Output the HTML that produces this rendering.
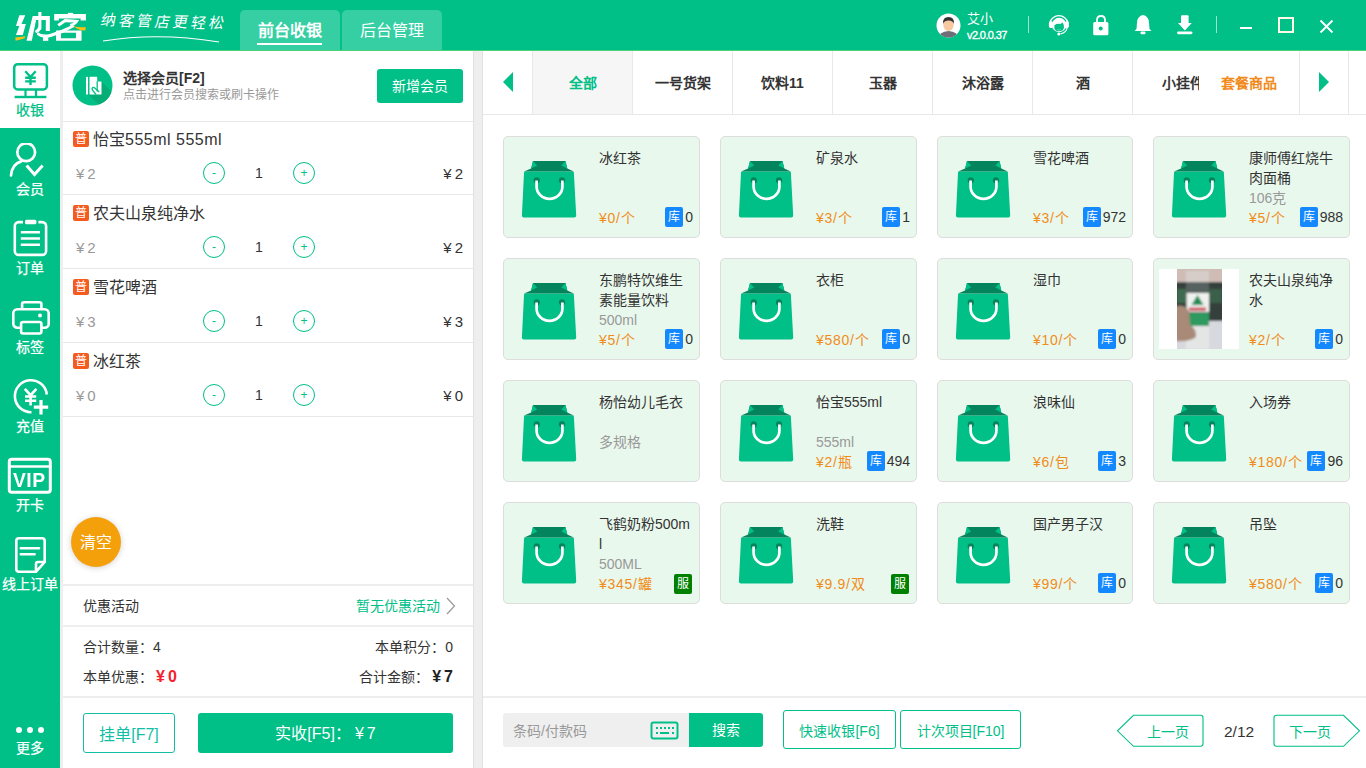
<!DOCTYPE html>
<html lang="zh-CN"><head><meta charset="utf-8">
<style>
*{margin:0;padding:0;box-sizing:border-box}
html,body{width:1366px;height:768px;overflow:hidden;background:#eeeeee;font-family:"Liberation Sans",sans-serif;color:#333}
.a{position:absolute}
#hdr{left:0;top:0;width:1366px;height:51px;background:#00bf87;border-bottom:1px solid #4cd27a}
.tab{top:10px;height:40px;width:100px;background:#35cfa3;border-radius:5px 5px 0 0;color:#fff;font-size:16px;text-align:center;line-height:42px}
#side{left:0;top:51px;width:60px;height:717px;background:#00bf87}
.sn{left:0;width:60px;text-align:center;color:#fff;font-size:14px;line-height:14px;-webkit-text-stroke:0.25px currentColor}
#lp{left:62px;top:51px;width:411px;height:717px;background:#fff}
#rp{left:483px;top:51px;width:883px;height:717px;background:#fff}
.ln{background:#e8e8e8}
.tag{width:16px;height:16px;background:#f55a1e;color:#fff;font-size:12px;line-height:16px;text-align:center;border-radius:2px}
.nm{font-size:16px;color:#333;line-height:18px;white-space:nowrap}
.pr{font-size:15px;color:#999;line-height:16px}
.circ{width:22px;height:22px;border:1px solid #00bf87;border-radius:50%;color:#00bf87;font-size:12px;text-align:center;line-height:20px}
.qty{font-size:14px;color:#333;line-height:16px}
.sub{font-size:15px;color:#333;line-height:16px;text-align:right}
.cat{top:0;height:63px;width:100px;border-left:1px solid #e8e8e8;text-align:center;line-height:65px;font-size:14px;font-weight:bold;color:#333}
.card{width:197px;height:102px;background:#e9f8ed;border:1px solid #dcdddc;border-radius:5px}
.card svg{position:absolute;left:14px;top:18px}
.cn{left:95px;top:12px;font-size:14px;line-height:19px;color:#333;width:98px}
.cs{left:95px;font-size:14px;line-height:16px;color:#999}
.cp{left:95px;top:72px;font-size:14px;line-height:18px;color:#f08c1a;letter-spacing:0.7px}
.kt{top:70px;width:19px;height:20px;background:#1488ff;color:#fff;font-size:12px;line-height:20px;text-align:center;border-radius:2px}
.kv{top:72px;font-size:14px;line-height:18px;color:#333}
.fz{top:71px;width:18px;height:20px;background:#008000;color:#fff;font-size:12px;line-height:20px;text-align:center;border-radius:2px;left:170px}
.y{margin-right:3px}
.obtn{border:1px solid #00bf87;border-radius:3px;color:#00bf87;font-size:14px;text-align:center;background:#fff}
</style></head><body>
<svg width="0" height="0" style="position:absolute">
<defs>
<symbol id="bag" viewBox="0 0 64 67">
<path d="M7,16.6 L54.9,16.6 Q55.9,16.6 55.9,18 L58.2,60.6 Q58.2,62.6 56.2,62.6 L5.9,62.6 Q3.9,62.6 3.9,60.6 L6,18 Q6.1,16.6 7,16.6 Z" fill="#00bf87"/>
<path d="M15,6 L47.5,6 L49.3,13.5 L55.8,16.6 L6.1,16.6 L13.1,13.5 Z" fill="#04845c"/>
<path d="M15,6 L13.1,13.5 L19.2,10.5 Z M47.5,6 L49.3,13.5 L43.2,10.5 Z" fill="#00bf87"/>
<circle cx="18.8" cy="25.3" r="3.1" fill="#04845c"/>
<circle cx="44" cy="25.3" r="3.1" fill="#04845c"/>
<path d="M18.6,25.5 L18.6,31.8 A12.9,12 0 0 0 44.4,31.8 L44.4,25.5" stroke="#fff" stroke-width="2.7" fill="none"/>
</symbol>
</defs>
</svg>

<!-- HEADER -->
<div id="hdr" class="a">
<svg class="a" style="left:10px;top:6px" width="85" height="40" viewBox="0 0 1366 643">
<path d="M150,150 L245,150 L185,290 L255,290 L205,465 L95,465 L150,320 L95,320 Z" fill="#fff"/>
<path d="M85,505 Q160,500 245,485 L235,520 Q170,540 90,560 Z" fill="#fdbf12"/>
<path d="M365,160 L640,160 L640,400 L575,400 L575,225 L420,225 L350,560 L265,560 Z" fill="#fff"/>
<path d="M455,95 L505,95 L505,370 Q470,420 420,440 L400,400 Q450,370 455,330 Z" fill="#fff"/>
<path d="M530,480 L615,480 L615,560 L530,560 Z" fill="#fff"/>
<path d="M930,110 L1015,110 L1015,135 L930,135 Z" fill="#fff"/>
<path d="M710,130 L1220,130 L1220,235 L1135,235 L1135,200 L785,200 L785,235 L710,235 Z" fill="#fff"/>
<path d="M760,295 L880,210 L1110,225 Q1080,300 980,335 L960,290 Q1010,275 1030,265 L890,262 L790,330 Z" fill="#fff"/>
<path d="M445,420 Q520,480 640,450 Q850,380 1010,300 L1040,335 Q860,440 660,500 Q520,535 430,460 Z" fill="#fff"/>
<path d="M740,395 L1150,395 L1150,560 L740,560 Z M820,430 L820,520 L1060,520 L1060,430 Z" fill="#fff" fill-rule="evenodd"/>
<path d="M1020,325 Q1100,350 1220,340 L1210,395 Q1130,395 1080,365 Z" fill="#fdbf12"/>
</svg>
<div class="a" style="left:101px;top:12px;font-size:15px;line-height:20px;color:#fff;letter-spacing:3px;font-weight:300;transform:skewX(-10deg) rotate(1.5deg)">纳客管店更轻松</div>
<svg class="a" style="left:100px;top:33px" width="125" height="12"><path d="M3,8 Q58,-1 119,9" stroke="#fff" stroke-width="1.2" fill="none"/></svg>
<div class="a tab" style="left:240px;font-weight:bold">前台收银</div>
<div class="a" style="left:257px;top:43px;width:65px;height:2px;background:#fff"></div>
<div class="a tab" style="left:342px">后台管理</div>
<!-- avatar -->
<svg class="a" style="left:936px;top:13px" width="25" height="25" viewBox="0 0 25 25">
<defs><clipPath id="av"><circle cx="12.5" cy="12.5" r="12"/></clipPath></defs>
<circle cx="12.5" cy="12.5" r="12" fill="#fff"/>
<g clip-path="url(#av)">
<path d="M2,25 Q3,19 12.5,18 Q22,19 23,25 Z" fill="#6f6e78"/>
<ellipse cx="12.5" cy="12" rx="5.2" ry="6" fill="#f6c9a0"/>
<path d="M7,11 Q6.5,4 12.5,4 Q18.5,4 18,11 Q17,7.5 12.5,7.5 Q8,7.5 7,11 Z" fill="#333"/>
</g>
</svg>
<div class="a" style="left:967px;top:11px;font-size:13px;line-height:15px;color:#fff">艾小</div>
<div class="a" style="left:967px;top:29px;font-size:11px;line-height:12px;color:#fff;letter-spacing:-0.6px;-webkit-text-stroke:0.35px #fff">v2.0.0.37</div>
<div class="a" style="left:1028px;top:16px;width:1px;height:17px;background:rgba(255,255,255,.6)"></div>
<!-- headset -->
<svg class="a" style="left:1047px;top:13px" width="24" height="24" viewBox="0 0 24 24">
<path d="M2.8,10 A9.3,9.3 0 0 1 21,10" stroke="#fff" stroke-width="1.4" fill="none"/>
<rect x="1.9" y="8.3" width="4" height="6.6" rx="1.6" fill="#fff"/>
<rect x="17.9" y="8.3" width="4" height="6.6" rx="1.6" fill="#fff"/>
<ellipse cx="12.1" cy="12" rx="7.3" ry="7.2" fill="#fff"/>
<path d="M7.4,12.3 Q9.5,10.6 13,10.9 Q14.8,10.7 15.2,9.2 Q17,11 16.9,13.2 L16.9,14.8 Q16.2,18.3 12.1,18.3 Q8,18.3 7.4,15.2 Z" fill="#00bf87"/>
<path d="M10.3,16.7 Q12,17.5 13.8,16.7" stroke="#7fdcc0" stroke-width="0.8" fill="none"/>
<path d="M20.2,14.5 Q19.5,19.6 13.6,20.8" stroke="#fff" stroke-width="1.2" fill="none"/>
<circle cx="11.8" cy="21" r="1.5" fill="#fff"/>
</svg>
<!-- lock -->
<svg class="a" style="left:1092px;top:14px" width="18" height="22" viewBox="0 0 18 22">
<path d="M5,9 L5,6 Q5,2 9,2 Q13,2 13,6 L13,9" stroke="#fff" stroke-width="1.8" fill="none"/>
<rect x="1.2" y="8" width="15.2" height="13.2" rx="1.5" fill="#fff"/>
<circle cx="8.7" cy="14.5" r="2" fill="#00bf87"/>
</svg>
<!-- bell -->
<svg class="a" style="left:1134px;top:14px" width="18" height="21" viewBox="0 0 18 21">
<path d="M9,1 Q14.5,2 15,8.5 L15.5,15 L17.5,17 L0.5,17 L2.5,15 L3,8.5 Q3.5,2 9,1 Z" fill="#fff"/>
<rect x="6.5" y="17.5" width="5" height="2.7" rx="1" fill="#fff"/>
</svg>
<!-- download -->
<svg class="a" style="left:1176px;top:14px" width="18" height="21" viewBox="0 0 18 21">
<rect x="5" y="1.2" width="7.6" height="8.5" rx="1" fill="#fff"/>
<path d="M2,9 L15.8,9 L8.9,16.5 Z" fill="#fff"/>
<rect x="1" y="17.4" width="15.5" height="2.8" rx="1.4" fill="#fff"/>
</svg>
<div class="a" style="left:1216px;top:16px;width:1px;height:17px;background:rgba(255,255,255,.6)"></div>
<div class="a" style="left:1240px;top:26.5px;width:12px;height:2.5px;background:#fff"></div>
<div class="a" style="left:1278px;top:17px;width:16px;height:16px;border:2px solid #fffbe6"></div>
<svg class="a" style="left:1319px;top:19px" width="15" height="15" viewBox="0 0 15 15"><path d="M1.5,1.5 L13.5,13.5 M13.5,1.5 L1.5,13.5" stroke="#fff" stroke-width="1.9"/></svg>
</div>

<!-- SIDEBAR -->
<div id="side" class="a">
<div class="a" style="left:0;top:0;width:60px;height:77px;background:#fff"></div>
<!-- 收银 monitor -->
<svg class="a" style="left:12px;top:11px" width="38" height="38" viewBox="0 0 38 38">
<rect x="2.2" y="2.2" width="32.7" height="25.2" rx="3.5" stroke="#00bf87" stroke-width="2.5" fill="none"/>
<path d="M13.3,9.3 L18.5,15 L23.7,9.3 M18.5,15 L18.5,23 M13.2,15.8 L23.8,15.8 M13.2,19.4 L23.8,19.4" stroke="#00bf87" stroke-width="2.4" fill="none"/>
<path d="M13.5,28 L13.5,34 M24,28 L24,34" stroke="#00bf87" stroke-width="2.2"/>
<rect x="2.6" y="33.8" width="31.8" height="2.4" fill="#00bf87"/>
</svg>
<div class="a sn" style="top:52px;color:#00bf87">收银</div>
<!-- 会员 -->
<svg class="a" style="left:8px;top:92px" width="44" height="36" viewBox="0 0 44 36">
<circle cx="18.2" cy="9.2" r="8.9" stroke="#fff" stroke-width="2.7" fill="none"/>
<path d="M3,32.5 Q4,21 13.2,18.4" stroke="#fff" stroke-width="2.7" fill="none" stroke-linecap="round"/>
<path d="M18.6,22.5 L26.5,31.5 L34.6,22.5" stroke="#fff" stroke-width="3" fill="none"/>
</svg>
<div class="a sn" style="top:131px">会员</div>
<!-- 订单 -->
<svg class="a" style="left:12px;top:168px" width="38" height="40" viewBox="0 0 38 40">
<rect x="2.8" y="3.1" width="31.3" height="32.8" rx="4" stroke="#fff" stroke-width="2.6" fill="none"/>
<rect x="11" y="0" width="15.4" height="6" fill="#00bf87"/>
<rect x="13" y="0.8" width="11.4" height="4.4" rx="1.5" fill="#fff"/>
<path d="M8.8,13.3 L28,13.3 M8.8,19.5 L28,19.5 M8.8,25.7 L28,25.7" stroke="#fff" stroke-width="2.4"/>
</svg>
<div class="a sn" style="top:210px">订单</div>
<!-- 标签 printer -->
<svg class="a" style="left:11px;top:248px" width="40" height="38" viewBox="0 0 40 38">
<rect x="11.1" y="3.3" width="19.3" height="9" rx="2" stroke="#fff" stroke-width="2.6" fill="none"/>
<rect x="2.3" y="10.3" width="35.4" height="18.4" rx="4" stroke="#fff" stroke-width="2.6" fill="#00bf87"/>
<rect x="10.1" y="23" width="20.3" height="11.5" rx="2" stroke="#fff" stroke-width="2.6" fill="#00bf87"/>
<circle cx="29" cy="16.5" r="2" fill="#fff"/>
</svg>
<div class="a sn" style="top:289px">标签</div>
<!-- 充值 -->
<svg class="a" style="left:11px;top:326px" width="40" height="40" viewBox="0 0 40 40">
<path d="M35.8,17.5 A16,16 0 1 0 20.5,35.2" stroke="#fff" stroke-width="2.6" fill="none"/>
<path d="M13.8,11.8 L19.6,18.2 L25.4,11.8 M19.6,18.2 L19.6,28.5 M14,19.5 L25.2,19.5 M14,23.8 L25.2,23.8" stroke="#fff" stroke-width="2.6" fill="none"/>
<path d="M30,23 L30,37.4 M22.8,30.2 L37.2,30.2" stroke="#fff" stroke-width="3.2"/>
</svg>
<div class="a sn" style="top:368px">充值</div>
<!-- 开卡 VIP -->
<svg class="a" style="left:7px;top:406px" width="46" height="38" viewBox="0 0 46 38">
<rect x="2.3" y="2.3" width="41" height="33" rx="2.5" stroke="#fff" stroke-width="3" fill="none"/>
<path d="M2,9.5 L44,9.5" stroke="#fff" stroke-width="2.6"/>
</svg>
<div class="a" style="left:13px;top:417px;font-size:21px;line-height:24px;font-weight:bold;color:#fff;transform:scaleX(0.92);transform-origin:0 0;letter-spacing:0.5px">VIP</div>
<div class="a sn" style="top:447px">开卡</div>
<!-- 线上订单 -->
<svg class="a" style="left:14px;top:485px" width="34" height="38" viewBox="0 0 34 38">
<path d="M22,35.7 L5,35.7 Q2.3,35.7 2.3,33 L2.3,5 Q2.3,2.3 5,2.3 L28,2.3 Q30.7,2.3 30.7,5 L30.7,26 Z" stroke="#fff" stroke-width="2.6" fill="none"/>
<path d="M22,35.7 L22,28 Q22,26 24,26 L30.7,26" stroke="#fff" stroke-width="2.6" fill="none"/>
<path d="M6.8,12.2 L25,12.2 M6.8,18.3 L20.6,18.3" stroke="#fff" stroke-width="2.6" stroke-linecap="round"/>
</svg>
<div class="a sn" style="top:526px;font-size:14px">线上订单</div>
<!-- 更多 -->
<div class="a" style="left:16px;top:676px;width:6px;height:6px;border-radius:50%;background:#fff"></div>
<div class="a" style="left:27px;top:676px;width:6px;height:6px;border-radius:50%;background:#fff"></div>
<div class="a" style="left:38px;top:676px;width:6px;height:6px;border-radius:50%;background:#fff"></div>
<div class="a sn" style="top:690px">更多</div>
</div>

<!-- LEFT PANEL -->
<div class="a" style="left:473px;top:51px;width:1px;height:717px;background:#e2e2e2;z-index:2"></div>
<div class="a" style="left:482px;top:51px;width:1px;height:717px;background:#e2e2e2;z-index:2"></div>
<div class="a" style="left:62px;top:51px;width:1px;height:717px;background:#eeeeee;z-index:2"></div>
<div id="lp" class="a">
<!-- member -->
<svg class="a" style="left:10px;top:14px" width="41" height="41" viewBox="0 0 41 41">
<defs><clipPath id="mc"><circle cx="20.5" cy="20.5" r="20"/></clipPath></defs>
<circle cx="20.5" cy="20.5" r="20" fill="#00bf87"/>
<path d="M29.5,16.5 L46,33 L33,46 L17,30 Z" fill="#05ad76" clip-path="url(#mc)"/>
<rect x="14" y="11.8" width="2" height="17.8" rx="0.6" fill="#fff"/>
<path d="M17.5,12.4 Q17.5,11.8 18.1,11.8 L24.6,11.8 Q25.2,11.8 25.2,12.4 L25.2,16.5 L28.9,16.5 Q29.5,16.5 29.5,17.1 L29.5,29 Q29.5,29.6 28.9,29.6 L18.1,29.6 Q17.5,29.6 17.5,29 Z" fill="#fff"/>
<path d="M25.2,16.2 L25.2,26.6" stroke="#00bf87" stroke-width="1.3"/>
<path d="M27.2,27 L22.8,23 Q20.8,21.5 20.1,23.4 Q19.8,24.8 21.6,26.6 L24.2,29.6" stroke="#00bf87" stroke-width="1.4" fill="none"/>
</svg>
<div class="a" style="left:61px;top:19px;font-size:14px;line-height:16px;font-weight:bold;color:#333">选择会员[F2]</div>
<div class="a" style="left:61px;top:37px;font-size:12px;line-height:14px;color:#999">点击进行会员搜索或刷卡操作</div>
<div class="a" style="left:315px;top:18px;width:86px;height:34px;background:#00bf87;border-radius:3px;color:#fff;font-size:14px;line-height:35px;text-align:center">新增会员</div>
<div class="a ln" style="left:0;top:70px;width:411px;height:1px"></div>

<!-- items -->
<div class="a" style="left:0;top:71px;width:411px;height:74px">
 <div class="a tag" style="left:11px;top:9px">普</div>
 <div class="a nm" style="left:31px;top:9px">怡宝<span style="letter-spacing:0.5px">555ml 555ml</span></div>
 <div class="a pr" style="left:14px;top:44px"><span class="y">¥</span>2</div>
 <div class="a circ" style="left:141px;top:40px">-</div>
 <div class="a qty" style="left:193px;top:43px">1</div>
 <div class="a circ" style="left:231px;top:40px">+</div>
 <div class="a sub" style="left:301px;top:44px;width:100px"><span class="y">¥</span>2</div>
</div>
<div class="a ln" style="left:0;top:143px;width:411px;height:1px"></div>
<div class="a" style="left:0;top:145px;width:411px;height:74px">
 <div class="a tag" style="left:11px;top:9px">普</div>
 <div class="a nm" style="left:31px;top:9px">农夫山泉纯净水</div>
 <div class="a pr" style="left:14px;top:44px"><span class="y">¥</span>2</div>
 <div class="a circ" style="left:141px;top:40px">-</div>
 <div class="a qty" style="left:193px;top:43px">1</div>
 <div class="a circ" style="left:231px;top:40px">+</div>
 <div class="a sub" style="left:301px;top:44px;width:100px"><span class="y">¥</span>2</div>
</div>
<div class="a ln" style="left:0;top:217px;width:411px;height:1px"></div>
<div class="a" style="left:0;top:219px;width:411px;height:74px">
 <div class="a tag" style="left:11px;top:9px">普</div>
 <div class="a nm" style="left:31px;top:9px">雪花啤酒</div>
 <div class="a pr" style="left:14px;top:44px"><span class="y">¥</span>3</div>
 <div class="a circ" style="left:141px;top:40px">-</div>
 <div class="a qty" style="left:193px;top:43px">1</div>
 <div class="a circ" style="left:231px;top:40px">+</div>
 <div class="a sub" style="left:301px;top:44px;width:100px"><span class="y">¥</span>3</div>
</div>
<div class="a ln" style="left:0;top:291px;width:411px;height:1px"></div>
<div class="a" style="left:0;top:293px;width:411px;height:74px">
 <div class="a tag" style="left:11px;top:9px">普</div>
 <div class="a nm" style="left:31px;top:9px">冰红茶</div>
 <div class="a pr" style="left:14px;top:44px"><span class="y">¥</span>0</div>
 <div class="a circ" style="left:141px;top:40px">-</div>
 <div class="a qty" style="left:193px;top:43px">1</div>
 <div class="a circ" style="left:231px;top:40px">+</div>
 <div class="a sub" style="left:301px;top:44px;width:100px"><span class="y">¥</span>0</div>
</div>
<div class="a ln" style="left:0;top:365px;width:411px;height:1px"></div>

<!-- clear -->
<div class="a" style="left:9px;top:466px;width:50px;height:50px;border-radius:50%;background:#f3a00b;color:#fff;font-size:16px;line-height:52px;text-align:center;box-shadow:0 1px 6px rgba(0,0,0,.18)">清空</div>

<div class="a" style="left:0;top:533px;width:411px;height:2px;background:#eeeeee"></div>
<div class="a" style="left:21px;top:547px;font-size:14px;line-height:16px;color:#333">优惠活动</div>
<div class="a" style="left:294px;top:547px;font-size:14px;line-height:16px;color:#00bf87">暂无优惠活动</div>
<svg class="a" style="left:383px;top:545px" width="12" height="20" viewBox="0 0 12 20"><path d="M2,2 L9.5,10 L2,18" stroke="#999" stroke-width="1.2" fill="none"/></svg>
<div class="a" style="left:0;top:574px;width:411px;height:2px;background:#eeeeee"></div>
<div class="a" style="left:21px;top:588px;font-size:14px;line-height:16px;color:#333">合计数量：4</div>
<div class="a" style="left:291px;top:588px;width:100px;text-align:right;font-size:14px;line-height:16px;color:#333">本单积分：0</div>
<div class="a" style="left:21px;top:618px;font-size:14px;line-height:16px;color:#333">本单优惠：<b style="color:#f5222d;font-size:16px;margin-left:3px"><span class="y">¥</span>0</b></div>
<div class="a" style="left:241px;top:618px;width:150px;text-align:right;font-size:14px;line-height:16px;color:#333">合计金额：<b style="font-size:16px;color:#222;margin-left:3px"><span class="y">¥</span>7</b></div>
<div class="a" style="left:0;top:645px;width:411px;height:2px;background:#eeeeee"></div>
<div class="a obtn" style="left:21px;top:662px;width:92px;height:40px;line-height:42px;font-size:16px;border-color:#12bfa6;color:#12bfa6">挂单[F7]</div>
<div class="a" style="left:136px;top:662px;width:255px;height:40px;background:#00bf87;border-radius:3px;color:#fff;font-size:16px;line-height:42px;text-align:center">实收[F5]：<span class="y" style="margin-left:4px">¥</span>7</div>
</div>

<!-- RIGHT PANEL -->
<div id="rp" class="a">
<div class="a" style="left:50px;top:0;width:99px;height:63px;background:#f6f6f6"></div>
<svg class="a" style="left:19px;top:20px" width="12" height="22" viewBox="0 0 12 22"><path d="M11,1 L11,21 L1,11 Z" fill="#00bf87"/></svg>
<div class="a cat" style="left:49px;color:#00bf87">全部</div>
<div class="a cat" style="left:149px;color:#333">一号货架</div>
<div class="a cat" style="left:249px;color:#333">饮料11</div>
<div class="a cat" style="left:349px;color:#333">玉器</div>
<div class="a cat" style="left:449px;color:#333">沐浴露</div>
<div class="a cat" style="left:549px;color:#333">酒</div>
<div class="a cat" style="left:649px;color:#333">小挂件</div>
<div class="a" style="left:716px;top:0;width:100px;height:63px;background:#fff"></div>
<div class="a" style="left:716px;top:0;width:100px;height:63px;line-height:65px;text-align:center;font-size:14px;font-weight:bold;color:#f08a1a">套餐商品</div>
<div class="a" style="left:816px;top:0;width:1px;height:63px;background:#e8e8e8"></div>
<div class="a" style="left:865px;top:0;width:1px;height:63px;background:#e8e8e8"></div>
<svg class="a" style="left:835px;top:20px" width="12" height="22" viewBox="0 0 12 22"><path d="M1,1 L1,21 L11,11 Z" fill="#00bf87"/></svg>
<div class="a" style="left:0;top:63px;width:883px;height:1px;background:#e8e8e8"></div>
<div class="a card" style="left:20px;top:85px">
<svg width="64" height="67"><use href="#bag"/></svg>
<div class="a cn" style="top:12px">冰红茶</div>
<div class="a cp">¥0/个</div>
<div class="a" style="right:6px;top:70px;height:20px;display:flex;align-items:center"><span style="display:inline-block;width:18px;height:20px;background:#1488ff;color:#fff;font-size:12px;line-height:20px;text-align:center;border-radius:2px">库</span><span style="font-size:14px;color:#333;margin-left:2px">0</span></div>
</div>
<div class="a card" style="left:237px;top:85px">
<svg width="64" height="67"><use href="#bag"/></svg>
<div class="a cn" style="top:12px">矿泉水</div>
<div class="a cp">¥3/个</div>
<div class="a" style="right:6px;top:70px;height:20px;display:flex;align-items:center"><span style="display:inline-block;width:18px;height:20px;background:#1488ff;color:#fff;font-size:12px;line-height:20px;text-align:center;border-radius:2px">库</span><span style="font-size:14px;color:#333;margin-left:2px">1</span></div>
</div>
<div class="a card" style="left:454px;top:85px;width:196px">
<svg width="64" height="67"><use href="#bag"/></svg>
<div class="a cn" style="top:12px">雪花啤酒</div>
<div class="a cp">¥3/个</div>
<div class="a" style="right:6px;top:70px;height:20px;display:flex;align-items:center"><span style="display:inline-block;width:18px;height:20px;background:#1488ff;color:#fff;font-size:12px;line-height:20px;text-align:center;border-radius:2px">库</span><span style="font-size:14px;color:#333;margin-left:2px">972</span></div>
</div>
<div class="a card" style="left:670px;top:85px">
<svg width="64" height="67"><use href="#bag"/></svg>
<div class="a cn" style="top:12px">康师傅红烧牛</div>
<div class="a cn" style="top:32px">肉面桶</div>
<div class="a cs" style="top:53px">106克</div>
<div class="a cp">¥5/个</div>
<div class="a" style="right:6px;top:70px;height:20px;display:flex;align-items:center"><span style="display:inline-block;width:18px;height:20px;background:#1488ff;color:#fff;font-size:12px;line-height:20px;text-align:center;border-radius:2px">库</span><span style="font-size:14px;color:#333;margin-left:2px">988</span></div>
</div>
<div class="a card" style="left:20px;top:207px">
<svg width="64" height="67"><use href="#bag"/></svg>
<div class="a cn" style="top:12px">东鹏特饮维生</div>
<div class="a cn" style="top:32px">素能量饮料</div>
<div class="a cs" style="top:53px">500ml</div>
<div class="a cp">¥5/个</div>
<div class="a" style="right:6px;top:70px;height:20px;display:flex;align-items:center"><span style="display:inline-block;width:18px;height:20px;background:#1488ff;color:#fff;font-size:12px;line-height:20px;text-align:center;border-radius:2px">库</span><span style="font-size:14px;color:#333;margin-left:2px">0</span></div>
</div>
<div class="a card" style="left:237px;top:207px">
<svg width="64" height="67"><use href="#bag"/></svg>
<div class="a cn" style="top:12px">衣柜</div>
<div class="a cp">¥580/个</div>
<div class="a" style="right:6px;top:70px;height:20px;display:flex;align-items:center"><span style="display:inline-block;width:18px;height:20px;background:#1488ff;color:#fff;font-size:12px;line-height:20px;text-align:center;border-radius:2px">库</span><span style="font-size:14px;color:#333;margin-left:2px">0</span></div>
</div>
<div class="a card" style="left:454px;top:207px;width:196px">
<svg width="64" height="67"><use href="#bag"/></svg>
<div class="a cn" style="top:12px">湿巾</div>
<div class="a cp">¥10/个</div>
<div class="a" style="right:6px;top:70px;height:20px;display:flex;align-items:center"><span style="display:inline-block;width:18px;height:20px;background:#1488ff;color:#fff;font-size:12px;line-height:20px;text-align:center;border-radius:2px">库</span><span style="font-size:14px;color:#333;margin-left:2px">0</span></div>
</div>
<div class="a card" style="left:670px;top:207px">
<div class="a" style="left:5px;top:10px;width:80px;height:80px;background:#fff"></div>
<svg class="a" style="left:23px;top:10px" width="45" height="80" viewBox="0 0 45 80"><defs><filter id="bl" x="0" y="0" width="1" height="1"><feGaussianBlur stdDeviation="0.9"/></filter><clipPath id="pc"><rect width="45" height="80"/></clipPath></defs><g clip-path="url(#pc)"><g filter="url(#bl)"><rect x="-3" y="-3" width="51" height="86" fill="#34403c"/><rect x="-3" y="-3" width="51" height="16" fill="#cfbcb5"/><rect x="0" y="20" width="9" height="14" fill="#3f6a50"/><rect x="32" y="20" width="13" height="14" fill="#3b5e48"/><rect x="-3" y="52" width="51" height="31" fill="#d8d9de"/><rect x="9" y="2" width="23" height="11" fill="#d6cdc9"/><rect x="9" y="13" width="23" height="11" fill="#56625e"/><rect x="9.5" y="24" width="22.5" height="19" fill="#eef1ee"/><path d="M20.5,26 L14.5,36 L26.5,36 Z" fill="#248c55"/><rect x="12" y="38.5" width="17" height="3.5" fill="#d25864"/><rect x="9.5" y="43.5" width="22.5" height="13.5" fill="#2f9a60"/><rect x="9" y="57" width="23" height="23" fill="#e4e6e6"/><path d="M-3,38 Q7,34 12,42 L13,56 Q20,60 19,68 Q14,73 -3,72 Z" fill="#a98a78"/></g></g></svg>
<div class="a cn" style="top:12px">农夫山泉纯净</div>
<div class="a cn" style="top:32px">水</div>
<div class="a cp">¥2/个</div>
<div class="a" style="right:6px;top:70px;height:20px;display:flex;align-items:center"><span style="display:inline-block;width:18px;height:20px;background:#1488ff;color:#fff;font-size:12px;line-height:20px;text-align:center;border-radius:2px">库</span><span style="font-size:14px;color:#333;margin-left:2px">0</span></div>
</div>
<div class="a card" style="left:20px;top:329px">
<svg width="64" height="67"><use href="#bag"/></svg>
<div class="a cn" style="top:12px">杨怡幼儿毛衣</div>
<div class="a cs" style="top:53px">多规格</div>
</div>
<div class="a card" style="left:237px;top:329px">
<svg width="64" height="67"><use href="#bag"/></svg>
<div class="a cn" style="top:12px">怡宝555ml</div>
<div class="a cs" style="top:53px">555ml</div>
<div class="a cp">¥2/瓶</div>
<div class="a" style="right:6px;top:70px;height:20px;display:flex;align-items:center"><span style="display:inline-block;width:18px;height:20px;background:#1488ff;color:#fff;font-size:12px;line-height:20px;text-align:center;border-radius:2px">库</span><span style="font-size:14px;color:#333;margin-left:2px">494</span></div>
</div>
<div class="a card" style="left:454px;top:329px;width:196px">
<svg width="64" height="67"><use href="#bag"/></svg>
<div class="a cn" style="top:12px">浪味仙</div>
<div class="a cp">¥6/包</div>
<div class="a" style="right:6px;top:70px;height:20px;display:flex;align-items:center"><span style="display:inline-block;width:18px;height:20px;background:#1488ff;color:#fff;font-size:12px;line-height:20px;text-align:center;border-radius:2px">库</span><span style="font-size:14px;color:#333;margin-left:2px">3</span></div>
</div>
<div class="a card" style="left:670px;top:329px">
<svg width="64" height="67"><use href="#bag"/></svg>
<div class="a cn" style="top:12px">入场券</div>
<div class="a cp">¥180/个</div>
<div class="a" style="right:6px;top:70px;height:20px;display:flex;align-items:center"><span style="display:inline-block;width:18px;height:20px;background:#1488ff;color:#fff;font-size:12px;line-height:20px;text-align:center;border-radius:2px">库</span><span style="font-size:14px;color:#333;margin-left:2px">96</span></div>
</div>
<div class="a card" style="left:20px;top:451px">
<svg width="64" height="67"><use href="#bag"/></svg>
<div class="a cn" style="top:12px">飞鹤奶粉500m</div>
<div class="a cn" style="top:32px">l</div>
<div class="a cs" style="top:53px">500ML</div>
<div class="a cp">¥345/罐</div>
<div class="a fz">服</div>
</div>
<div class="a card" style="left:237px;top:451px">
<svg width="64" height="67"><use href="#bag"/></svg>
<div class="a cn" style="top:12px">洗鞋</div>
<div class="a cp">¥9.9/双</div>
<div class="a fz">服</div>
</div>
<div class="a card" style="left:454px;top:451px;width:196px">
<svg width="64" height="67"><use href="#bag"/></svg>
<div class="a cn" style="top:12px">国产男子汉</div>
<div class="a cp">¥99/个</div>
<div class="a" style="right:6px;top:70px;height:20px;display:flex;align-items:center"><span style="display:inline-block;width:18px;height:20px;background:#1488ff;color:#fff;font-size:12px;line-height:20px;text-align:center;border-radius:2px">库</span><span style="font-size:14px;color:#333;margin-left:2px">0</span></div>
</div>
<div class="a card" style="left:670px;top:451px">
<svg width="64" height="67"><use href="#bag"/></svg>
<div class="a cn" style="top:12px">吊坠</div>
<div class="a cp">¥580/个</div>
<div class="a" style="right:6px;top:70px;height:20px;display:flex;align-items:center"><span style="display:inline-block;width:18px;height:20px;background:#1488ff;color:#fff;font-size:12px;line-height:20px;text-align:center;border-radius:2px">库</span><span style="font-size:14px;color:#333;margin-left:2px">0</span></div>
</div>
<div class="a" style="left:0;top:645px;width:883px;height:2px;background:#eeeeee"></div>
<div class="a" style="left:20px;top:662px;width:186px;height:34px;background:#efefef;border-radius:3px 0 0 3px"></div>
<div class="a" style="left:30px;top:672px;font-size:14px;line-height:16px;color:#999">条码/付款码</div>
<svg class="a" style="left:167px;top:670px" width="30" height="20" viewBox="0 0 30 20"><rect x="1.5" y="1.5" width="26" height="16" rx="2" stroke="#00bf87" stroke-width="2" fill="none"/><path d="M6,7 L8,7 M10,7 L12,7 M14,7 L16,7 M18,7 L20,7 M22,7 L24,7 M6,12 L8,12 M10,12 L19,12 M22,12 L24,12" stroke="#00bf87" stroke-width="2"/></svg>
<div class="a" style="left:206px;top:662px;width:74px;height:34px;background:#00bf87;border-radius:0 3px 3px 0;color:#fff;font-size:14px;line-height:34px;text-align:center">搜索</div>
<div class="a obtn" style="left:300px;top:659px;width:113px;height:39px;line-height:41px">快速收银[F6]</div>
<div class="a obtn" style="left:417px;top:659px;width:121px;height:39px;line-height:41px">计次项目[F10]</div>
<svg class="a" style="left:633px;top:663px" width="89" height="34" viewBox="0 0 89 34"><path d="M17.5,1.3 L84.5,1.3 Q87,1.3 87,3.8 L87,29.8 Q87,32.3 84.5,32.3 L17.5,32.3 L1.5,16.8 Z" stroke="#00bf87" stroke-width="1.1" fill="#fff"/></svg>
<div class="a" style="left:664px;top:672px;font-size:14px;line-height:18px;color:#00bf87">上一页</div>
<div class="a" style="left:741px;top:672px;font-size:15.5px;line-height:18px;color:#333">2/12</div>
<svg class="a" style="left:790px;top:663px" width="89" height="34" viewBox="0 0 89 34"><path d="M3.5,1.3 L70.5,1.3 L86.5,16.8 L70.5,32.3 L3.5,32.3 Q1,32.3 1,29.8 L1,3.8 Q1,1.3 3.5,1.3 Z" stroke="#00bf87" stroke-width="1.1" fill="#fff"/></svg>
<div class="a" style="left:806px;top:672px;font-size:14px;line-height:18px;color:#00bf87">下一页</div>
</div>

</body></html>
